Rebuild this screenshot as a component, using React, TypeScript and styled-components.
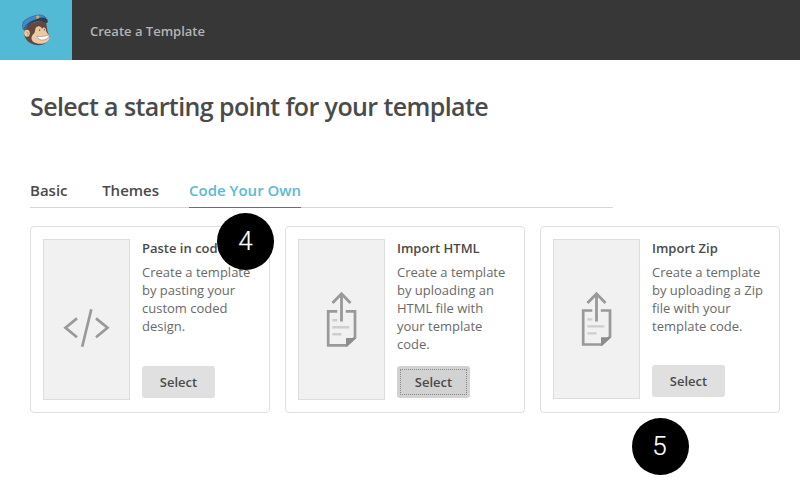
import React from "react";
import styled, { createGlobalStyle } from "styled-components";

const GlobalStyle = createGlobalStyle`
  * { box-sizing: border-box; }
  body {
    margin: 0;
    background: #fff;
    color: #4a4a4a;
    font-family: "Open Sans", "Noto Sans", sans-serif;
    overflow: hidden;
  }
  h1, h2, p { margin: 0; }
`;

const Page = styled.div`
  position: relative;
  width: 800px;
  height: 494px;
`;

const TopBar = styled.header`
  display: flex;
  align-items: center;
  height: 60px;
  background: #373737;
`;

const LogoTile = styled.div`
  width: 72px;
  height: 60px;
  background: #52bad5;
  svg { display: block; }
`;

const BarTitle = styled.span`
  margin: 2px 0 0 18px;
  font-size: 13px;
  line-height: 18px;
  font-weight: 600;
  color: #b4b4b4;
`;

const Content = styled.main`
  padding: 28px 20px 0 30px;
`;

const Heading = styled.h1`
  height: 36px;
  font-size: 25px;
  line-height: 36px;
  font-weight: 600;
  letter-spacing: -0.6px;
  white-space: nowrap;
`;

const Tabs = styled.nav`
  display: flex;
  gap: 34px;
  width: 583px;
  height: 32px;
  margin-top: 52px;
  border-bottom: 1px solid #d8d8d8;
`;

const Tab = styled.a<{ $active?: boolean; $pull?: number }>`
  height: 32px;
  margin-left: ${(p) => p.$pull ?? 0}px;
  padding-top: 4px;
  font-size: 15px;
  line-height: 20px;
  font-weight: 600;
  white-space: nowrap;
  color: ${(p) => (p.$active ? "#5bbad5" : "#4a4a4a")};
  border-bottom: 1px solid ${(p) => (p.$active ? "#6d6d6d" : "transparent")};
`;

const Cards = styled.div`
  display: flex;
  gap: 15px;
  margin-top: 18px;
`;

const Card = styled.section`
  display: flex;
  align-items: flex-start;
  width: 240px;
  height: 187px;
  padding: 12px;
  border: 1px solid #e0e0e0;
  border-radius: 4px;
`;

const Thumb = styled.div<{ $short?: boolean }>`
  flex: none;
  width: 87px;
  height: ${(p) => (p.$short ? 160 : 161)}px;
  border: 1px solid #dddddd;
  background: #f1f1f1;
  overflow: hidden;
  svg { display: block; }
`;

const Details = styled.div<{ $short?: boolean }>`
  display: flex;
  flex-direction: column;
  align-items: flex-start;
  height: ${(p) => (p.$short ? 158 : 159)}px;
  margin-left: 12px;
`;

const CardTitle = styled.h2`
  font-size: 13px;
  line-height: 18px;
  font-weight: 600;
  white-space: nowrap;
`;

const Description = styled.p`
  margin-top: 6px;
  font-size: 13px;
  line-height: 18px;
  color: #6a6a6a;
  white-space: pre;
`;

const SelectButton = styled.button<{ $focused?: boolean }>`
  width: 73px;
  height: 32px;
  margin-top: auto;
  padding: ${(p) => (p.$focused ? "3px" : "0")};
  border: 0;
  border-radius: 3px;
  background: ${(p) => (p.$focused ? "#d2d2d2" : "#e0e0e0")};
  font: 600 13px/26px "Open Sans", "Noto Sans", sans-serif;
  color: #4a4a4a;
`;

const FocusRing = styled.span`
  display: block;
  height: 26px;
  line-height: 24px;
  border: 1px dotted #888;
`;

const Badge = styled.div<{ $x: number; $y: number; $nudge?: number }>`
  position: absolute;
  left: ${(p) => p.$x}px;
  top: ${(p) => p.$y}px;
  width: 57px;
  height: 57px;
  padding-right: ${(p) => p.$nudge ?? 0}px;
  border-radius: 50%;
  background: #000;
  color: #fff;
  font: 300 26px/57px Roboto, sans-serif;
  -webkit-text-stroke: 0.2px #fff;
  text-align: center;
`;

const MascotLogo = () => (
  <svg width="72" height="60" viewBox="0 0 72 60">
    <path d="M25 28 C30 22 42 20 45.5 22 C47.5 26 46.5 30 48.5 34 C50.5 41 45 45.3 38.5 45.3 C31.5 45.3 26 41 24 35Z" fill="#65483d" />
    <path d="M35.5 28.5 C37 25 41.5 26 42 29 C43 26.5 46 27 46 30 C45.8 33 49.8 34 49.3 38.5 C48 44 39 45.3 33.5 42 C30.5 39.5 31 36 34 33.5 C35.4 32 34.8 30 35.5 28.5Z" fill="#edc8a6" />
    <ellipse cx="27" cy="33.2" rx="2.8" ry="3.5" fill="#edc8a6" />
    <path d="M26.2 31.8 Q29 32 28 35.3" fill="none" stroke="#b78a70" strokeWidth=".8" />
    <path d="M37 36 C40 37.2 45 36.3 49 34.8 C49.5 38 46 40.3 41 40 Q37.6 39.4 37 36Z" fill="#fff" stroke="#a57d67" strokeWidth=".6" />
    <path d="M39 30.2 h1.2 M43.9 29.8 h1" stroke="#5a4038" strokeWidth="1.3" />
    <path d="M23.2 29.5 C22.2 26 22.3 23 24 21 C28 17.5 34 15.5 39 14.9 C42 15 44.5 16 46 17.8 L44 20.5 C37 20 30 22 25.2 29.5Z" fill="#3f8ccb" stroke="#2d5677" strokeWidth=".6" />
    <path d="M24.2 28.8 C27 23 32 20.2 39 18.9" fill="none" stroke="#2b5f90" strokeWidth="1.3" />
    <path d="M36 19.7 C40 16.8 45.5 16.8 47.4 19.5 C48.2 21.5 47.6 23 46.4 23.2 C42 20.9 38 20.9 34.5 22 C31 23 28.5 25 26 28.2 C28 23.5 31.5 21 36 19.7Z" fill="#333b54" />
    <path d="M36 16.3 L37.6 15.2 L39.4 16.3 L38.8 18.4 L36.6 18.6Z" fill="#cfae5a" />
  </svg>
);

const CodeIcon = () => (
  <svg width="85" height="159" fill="none" stroke="#999" strokeWidth="2.7">
    <path d="M33 78.4 L21.5 87.8 L33 97.2 M52 78.4 L63.5 87.8 L52 97.2 M47.3 69.3 L38.2 106.8" />
  </svg>
);

const UploadIcon = ({ raise = 0 }: { raise?: number }) => (
  <svg width="85" height="159">
    <path d="M42.5 81.5 V54 M33.5 63 L42.5 53.7 L51.5 63" fill="none" stroke="#999" strokeWidth="2.8" />
    <g transform={`translate(0 ${-raise})`}>
      <path d="M38.3 71.3 H29.2 V105.3 H47.8 L56 97.5 V71.3 H46.8" fill="none" stroke="#999" strokeWidth="2.7" />
      <path d="M47 98 H57.3 L47 107Z" fill="#8c8c8c" />
      <path d="M33.3 80.2 H38.3 M33.3 87.2 H50.3 M33.3 94.2 H42.5" fill="none" stroke="#cecece" strokeWidth="2.4" />
    </g>
  </svg>
);

export default function App() {
  return (
    <>
      <GlobalStyle />
      <Page>
        <TopBar>
          <LogoTile><MascotLogo /></LogoTile>
          <BarTitle>Create a Template</BarTitle>
        </TopBar>
        <Content>
          <Heading>Select a starting point for your template</Heading>
          <Tabs>
            <Tab>Basic</Tab>
            <Tab $pull={0.6}>Themes</Tab>
            <Tab $active $pull={-4}>Code Your Own</Tab>
          </Tabs>
          <Cards>
            <Card>
              <Thumb><CodeIcon /></Thumb>
              <Details>
                <CardTitle>Paste in code</CardTitle>
                <Description>{"Create a template\nby pasting your\ncustom coded\ndesign."}</Description>
                <SelectButton>Select</SelectButton>
              </Details>
            </Card>
            <Card>
              <Thumb><UploadIcon /></Thumb>
              <Details>
                <CardTitle>Import HTML</CardTitle>
                <Description>{"Create a template\nby uploading an\nHTML file with\nyour template\ncode."}</Description>
                <SelectButton $focused><FocusRing>Select</FocusRing></SelectButton>
              </Details>
            </Card>
            <Card>
              <Thumb $short><UploadIcon raise={0.8} /></Thumb>
              <Details $short>
                <CardTitle>Import Zip</CardTitle>
                <Description>{"Create a template\nby uploading a Zip\nfile with your\ntemplate code."}</Description>
                <SelectButton>Select</SelectButton>
              </Details>
            </Card>
          </Cards>
        </Content>
        <Badge $x={217} $y={213}>4</Badge>
        <Badge $x={632} $y={418} $nudge={2}>5</Badge>
      </Page>
    </>
  );
}
